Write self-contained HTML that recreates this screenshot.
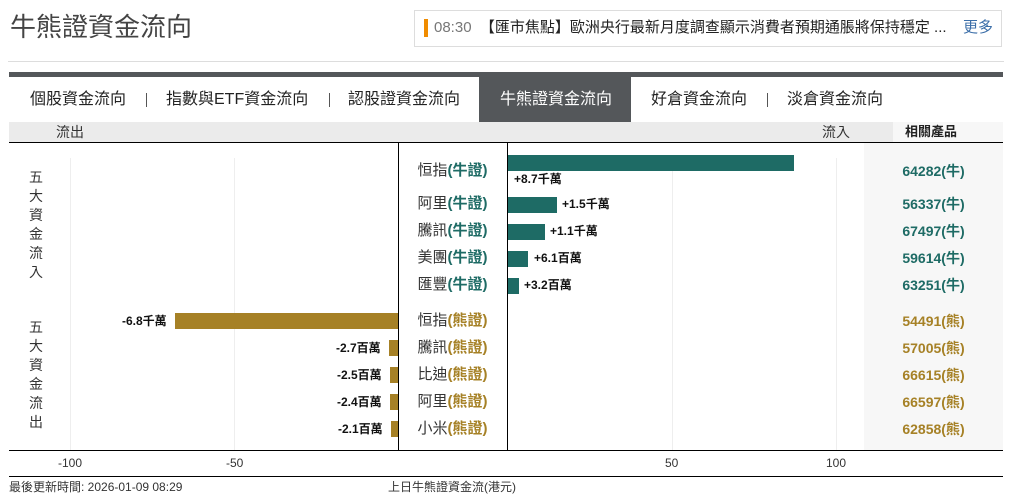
<!DOCTYPE html>
<html><head><meta charset="utf-8"><style>
*{margin:0;padding:0;box-sizing:border-box}
body{width:1012px;height:501px;background:#fff;position:relative;overflow:hidden;font-family:"Liberation Sans","Noto Sans CJK TC",sans-serif;color:#333}
.a{position:absolute;white-space:nowrap}
.t{background:#1e6b65;position:absolute;height:16px}
.g{background:#a68126;position:absolute;height:16px}
.lbl{position:absolute;font-size:12px;font-weight:bold;color:#111;white-space:nowrap;line-height:14px}
.nm{position:absolute;left:398px;width:109px;text-align:center;font-size:15px;color:#333;line-height:16px}
.nm b{font-weight:bold}
.pr{position:absolute;left:864px;width:139px;text-align:center;font-size:14px;font-weight:bold;line-height:16px}
.vt{position:absolute;left:28px;width:16px;font-size:14px;line-height:19px;text-align:center;color:#333}
.tab{position:absolute;top:77px;height:45px;line-height:45px;font-size:16px;color:#222}
.sep{position:absolute;top:93px;width:1px;height:14px;background:#555}
</style></head><body>
<div class="a" style="left:10px;top:11px;font-size:26px;color:#444;line-height:32px">牛熊證資金流向</div>
<div class="a" style="left:414px;top:10px;width:588px;height:37px;border:1px solid #ddd"></div>
<div class="a" style="left:424px;top:19px;width:4px;height:18px;background:#f08c00"></div>
<div class="a" style="left:434px;top:19px;font-size:15px;line-height:18px;color:#222"><span style="color:#777">08:30</span>&nbsp; 【匯市焦點】歐洲央行最新月度調查顯示消費者預期通脹將保持穩定 ...</div>
<div class="a" style="left:963px;top:19px;font-size:15px;line-height:18px;color:#3b6ea8">更多</div>
<div class="a" style="left:8px;top:61px;width:996px;height:1px;background:#ddd"></div>
<div class="a" style="left:9px;top:72px;width:994px;height:5px;background:#54575a"></div>
<div class="a" style="left:479px;top:77px;width:152px;height:45px;background:#54575a"></div>
<div class="tab" style="left:30px">個股資金流向</div>
<div class="sep" style="left:146px"></div>
<div class="tab" style="left:166px">指數與ETF資金流向</div>
<div class="sep" style="left:329px"></div>
<div class="tab" style="left:348px">認股證資金流向</div>
<div class="tab" style="left:500px;color:#fff">牛熊證資金流向</div>
<div class="tab" style="left:651px">好倉資金流向</div>
<div class="sep" style="left:767px"></div>
<div class="tab" style="left:787px">淡倉資金流向</div>
<div class="a" style="left:9px;top:122px;width:994px;height:20px;background:#ebebeb"></div>
<div class="a" style="left:893px;top:122px;width:110px;height:20px;background:#f7f7f7"></div>
<div class="a" style="left:56px;top:124px;font-size:14px;line-height:16px">流出</div>
<div class="a" style="left:822px;top:124px;font-size:14px;line-height:16px">流入</div>
<div class="a" style="left:905px;top:124px;font-size:13px;font-weight:bold;line-height:16px;color:#222">相關產品</div>
<div class="a" style="left:9px;top:142px;width:994px;height:1px;background:#000"></div>
<div class="a" style="left:864px;top:143px;width:139px;height:307px;background:#f7f7f7"></div>
<div class="a" style="left:70px;top:158px;width:1px;height:292px;background:#eee"></div>
<div class="a" style="left:234px;top:158px;width:1px;height:292px;background:#eee"></div>
<div class="a" style="left:672px;top:158px;width:1px;height:292px;background:#eee"></div>
<div class="a" style="left:836px;top:158px;width:1px;height:292px;background:#eee"></div>
<div class="a" style="left:398px;top:143px;width:1px;height:307px;background:#000"></div>
<div class="a" style="left:507px;top:143px;width:1px;height:307px;background:#000"></div>
<div class="a" style="left:9px;top:450px;width:994px;height:1px;background:#000"></div>
<div class="vt" style="top:168px">五<br>大<br>資<br>金<br>流<br>入</div>
<div class="vt" style="top:318px">五<br>大<br>資<br>金<br>流<br>出</div>

<div class="t" style="left:508px;top:155px;width:286px"></div>
<div class="lbl" style="left:514px;top:172px">+8.7千萬</div>
<div class="t" style="left:508px;top:197px;width:49px"></div>
<div class="lbl" style="left:562px;top:197px">+1.5千萬</div>
<div class="t" style="left:508px;top:224px;width:37px"></div>
<div class="lbl" style="left:550px;top:224px">+1.1千萬</div>
<div class="t" style="left:508px;top:251px;width:20px"></div>
<div class="lbl" style="left:534px;top:251px">+6.1百萬</div>
<div class="t" style="left:508px;top:278px;width:11px"></div>
<div class="lbl" style="left:524px;top:278px">+3.2百萬</div>

<div class="g" style="left:175px;top:313px;width:223px"></div>
<div class="lbl" style="left:122px;top:314px">-6.8千萬</div>
<div class="g" style="left:389px;top:340px;width:9px"></div>
<div class="lbl" style="left:336px;top:341px">-2.7百萬</div>
<div class="g" style="left:390px;top:367px;width:8px"></div>
<div class="lbl" style="left:337px;top:368px">-2.5百萬</div>
<div class="g" style="left:390px;top:394px;width:8px"></div>
<div class="lbl" style="left:337px;top:395px">-2.4百萬</div>
<div class="g" style="left:391px;top:421px;width:7px"></div>
<div class="lbl" style="left:338px;top:422px">-2.1百萬</div>

<div class="nm" style="top:163px">恒指<b style="color:#1e6b65">(牛證)</b></div>
<div class="nm" style="top:196px">阿里<b style="color:#1e6b65">(牛證)</b></div>
<div class="nm" style="top:223px">騰訊<b style="color:#1e6b65">(牛證)</b></div>
<div class="nm" style="top:250px">美團<b style="color:#1e6b65">(牛證)</b></div>
<div class="nm" style="top:277px">匯豐<b style="color:#1e6b65">(牛證)</b></div>
<div class="nm" style="top:313px">恒指<b style="color:#a68126">(熊證)</b></div>
<div class="nm" style="top:340px">騰訊<b style="color:#a68126">(熊證)</b></div>
<div class="nm" style="top:367px">比迪<b style="color:#a68126">(熊證)</b></div>
<div class="nm" style="top:394px">阿里<b style="color:#a68126">(熊證)</b></div>
<div class="nm" style="top:421px">小米<b style="color:#a68126">(熊證)</b></div>

<div class="pr" style="top:163px;color:#1e6b65">64282(牛)</div>
<div class="pr" style="top:196px;color:#1e6b65">56337(牛)</div>
<div class="pr" style="top:223px;color:#1e6b65">67497(牛)</div>
<div class="pr" style="top:250px;color:#1e6b65">59614(牛)</div>
<div class="pr" style="top:277px;color:#1e6b65">63251(牛)</div>
<div class="pr" style="top:313px;color:#a68126">54491(熊)</div>
<div class="pr" style="top:340px;color:#a68126">57005(熊)</div>
<div class="pr" style="top:367px;color:#a68126">66615(熊)</div>
<div class="pr" style="top:394px;color:#a68126">66597(熊)</div>
<div class="pr" style="top:421px;color:#a68126">62858(熊)</div>

<div class="a" style="left:58px;top:456px;font-size:12px;line-height:14px">-100</div>
<div class="a" style="left:226px;top:456px;font-size:12px;line-height:14px">-50</div>
<div class="a" style="left:665px;top:456px;font-size:12px;line-height:14px">50</div>
<div class="a" style="left:826px;top:456px;font-size:12px;line-height:14px">100</div>
<div class="a" style="left:9px;top:476px;width:994px;height:1px;background:#000"></div>
<div class="a" style="left:9px;top:480px;font-size:12px;line-height:14px">最後更新時間: 2026-01-09 08:29</div>
<div class="a" style="left:388px;top:480px;font-size:12px;line-height:14px">上日牛熊證資金流(港元)</div>
</body></html>
